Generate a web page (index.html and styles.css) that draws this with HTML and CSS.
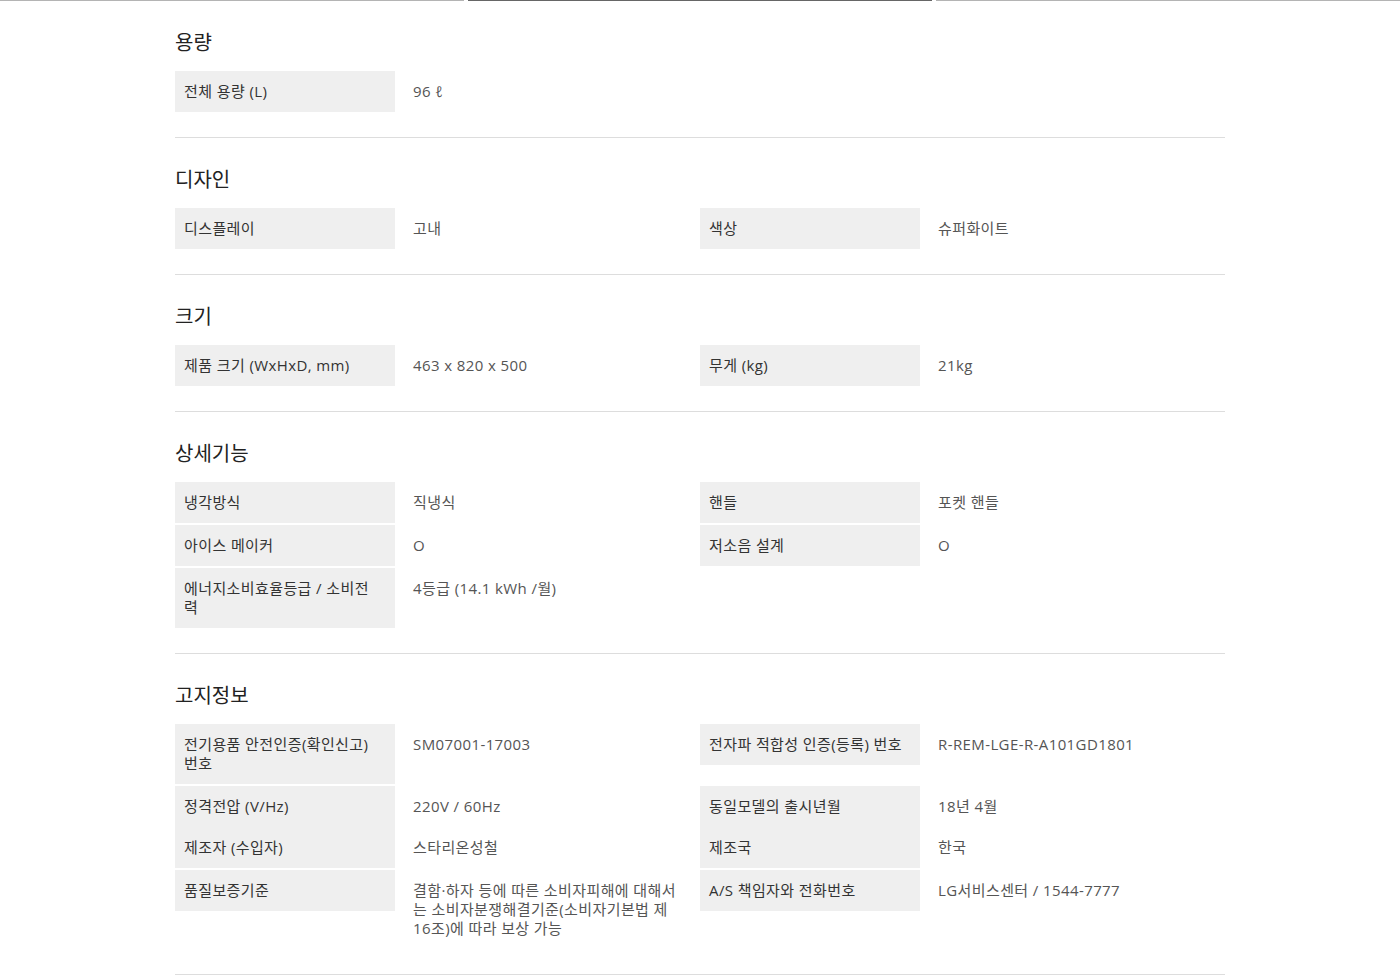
FILE: index.html
```html
<!DOCTYPE html>
<html lang="ko">
<head>
    <meta charset="UTF-8">
    <meta name="viewport" content="width=device-width, initial-scale=1.0">
    <title>제품 스펙</title>
    <link rel="stylesheet" href="styles.css">
</head>
<body>
    <div class="tab-line">
        <span></span>
        <span class="active"></span>
        <span></span>
    </div>
    <div class="container">
        <div class="spec-section">
            <h3>용량</h3>
            <div class="spec-grid">
                <dl class="spec"><dt>전체 용량 (L)</dt><dd>96 ℓ</dd></dl>
            </div>
        </div>

        <div class="spec-section">
            <h3>디자인</h3>
            <div class="spec-grid">
                <dl class="spec"><dt>디스플레이</dt><dd>고내</dd></dl>
                <dl class="spec"><dt>색상</dt><dd>슈퍼화이트</dd></dl>
            </div>
        </div>

        <div class="spec-section">
            <h3>크기</h3>
            <div class="spec-grid">
                <dl class="spec"><dt>제품 크기 (WxHxD, mm)</dt><dd>463 x 820 x 500</dd></dl>
                <dl class="spec"><dt>무게 (kg)</dt><dd>21kg</dd></dl>
            </div>
        </div>

        <div class="spec-section">
            <h3>상세기능</h3>
            <div class="spec-grid">
                <dl class="spec"><dt>냉각방식</dt><dd>직냉식</dd></dl>
                <dl class="spec"><dt>핸들</dt><dd>포켓 핸들</dd></dl>
                <dl class="spec"><dt>아이스 메이커</dt><dd>O</dd></dl>
                <dl class="spec"><dt>저소음 설계</dt><dd>O</dd></dl>
                <dl class="spec"><dt>에너지소비효율등급 / 소비전력</dt><dd>4등급 (14.1 kWh /월)</dd></dl>
            </div>
        </div>

        <div class="spec-section">
            <h3>고지정보</h3>
            <div class="spec-grid">
                <dl class="spec"><dt>전기용품 안전인증(확인신고) 번호</dt><dd>SM07001-17003</dd></dl>
                <dl class="spec"><dt>전자파 적합성 인증(등록) 번호</dt><dd>R-REM-LGE-R-A101GD1801</dd></dl>
                <dl class="spec"><dt>정격전압 (V/Hz)</dt><dd>220V / 60Hz</dd></dl>
                <dl class="spec"><dt>동일모델의 출시년월</dt><dd>18년 4월</dd></dl>
                <dl class="spec joined"><dt>제조자 (수입자)</dt><dd>스타리온성철</dd></dl>
                <dl class="spec joined"><dt>제조국</dt><dd>한국</dd></dl>
                <dl class="spec"><dt>품질보증기준</dt><dd>결함·하자 등에 따른 소비자피해에 대해서는 소비자분쟁해결기준(소비자기본법 제 16조)에 따라 보상 가능</dd></dl>
                <dl class="spec"><dt>A/S 책임자와 전화번호</dt><dd>LG서비스센터 / 1544-7777</dd></dl>
            </div>
        </div>
    </div>
</body>
</html>
```

FILE: styles.css
```css
body {
    margin: 0;
    background: #fff;
    font-family: "Open Sans", "Noto Sans CJK KR", sans-serif;
    color: #333;
}
.tab-line {
    display: flex;
    gap: 4px;
}
.tab-line span {
    flex: 1;
    height: 1px;
    background: #b4b4b4;
}
.tab-line span.active {
    background: #666;
}
.container {
    width: 1050px;
    margin: 0 auto;
}
.spec-section {
    padding: 28px 0 25px;
    border-bottom: 1px solid #ddd;
}
.spec-section h3 {
    margin: 0 0 14px;
    font-size: 20px;
    line-height: 28px;
    font-weight: 400;
    color: #222;
}
.spec-grid {
    display: grid;
    grid-template-columns: 1fr 1fr;
    row-gap: 2px;
    align-items: start;
}
.spec {
    display: grid;
    grid-template-columns: 220px 1fr;
    align-items: start;
    margin: 0;
    font-size: 15px;
    line-height: 19px;
    letter-spacing: 0.4px;
    word-break: break-all;
}
.spec.joined {
    margin-top: -2px;
}
.spec dt {
    background: #efefef;
    padding: 11px 16px 11px 9px;
    color: #333;
}
.spec dd {
    margin: 0;
    padding: 11px 23px 11px 18px;
    color: #555;
}
```
